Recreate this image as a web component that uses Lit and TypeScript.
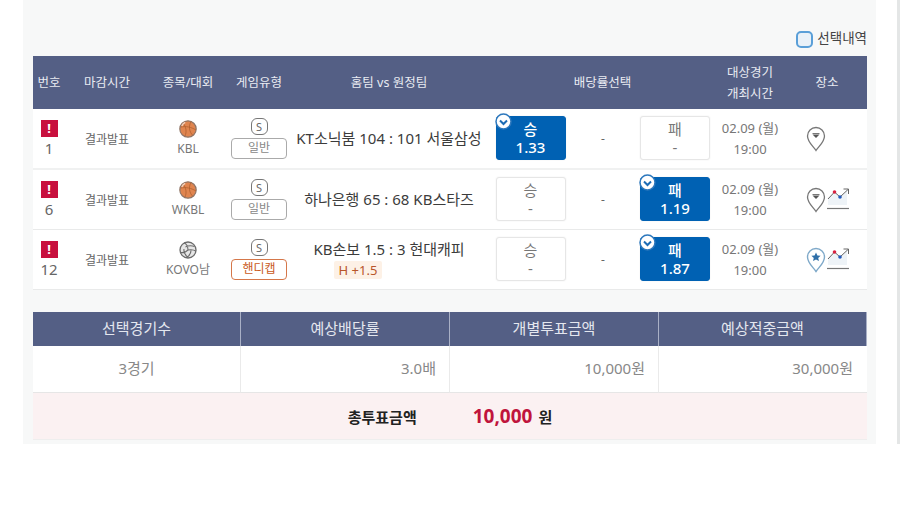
import { LitElement, html, css, svg } from "lit";
import { customElement } from "lit/decorators.js";
import { classMap } from "lit/directives/class-map.js";

const basket = svg`<svg width="18" height="18" viewBox="0 0 18 18"><circle cx="9" cy="9" r="8.200" fill="#e0854f" stroke="#8f7566" stroke-width="1.200"/><path d="M4 3.500C7 6 8 12 6 16M2 7c5-1 10 0 15 3M12 1.500C9.500 6 10 12 14 15.500" fill="none" stroke="#b0602f" stroke-width=".8"/><path d="M2.800 6c.8-1.800 2-3 3.400-3.600" fill="none" stroke="#f5d3bd" stroke-width="1.400"/></svg>`;
const volley = svg`<svg width="18" height="18" viewBox="0 0 18 18"><circle cx="9" cy="9" r="8" fill="#e6e6e6" stroke="#6b6b6b" stroke-width="1.300"/><path d="M9 9C9 6 7.500 3 5 1.800M9 9c3-.5 6-.3 8 1.200M9 9c-2 2-5 3-7.500 2.500M6.500 6c3-1.500 6-1.500 9-.5M5 8c-.5 3 1 6 4 8.500M12 9.500c0 3-1.500 5-3.500 6.500" fill="none" stroke="#6b6b6b" stroke-width="1.100"/></svg>`;
const pinDown = svg`<svg width="20" height="26" viewBox="0 0 20 26"><path d="M10 24.500C7 20 1.500 16 1.500 10a8.500 8.500 0 0 1 17 0C18.500 16 13 20 10 24.500Z" fill="#fff" stroke="#777" stroke-width="1.300"/><path d="M6.500 8.500h7L10 12Z" fill="#555"/><path d="M6.500 7.500h7" stroke="#555" stroke-width=".8"/></svg>`;
const pinStar = svg`<svg width="20" height="26" viewBox="0 0 20 26"><path d="M10 24.500C7 20 1.500 16 1.500 10a8.500 8.500 0 0 1 17 0C18.500 16 13 20 10 24.500Z" fill="#fff" stroke="#7fa9c9" stroke-width="1.400"/><path d="M10 5.500l1.400 3 3.200.3-2.400 2.100.8 3.200L10 12.400l-3 1.700.8-3.200-2.400-2.100 3.200-.3Z" fill="#2f6fa8"/></svg>`;
const chart = svg`<svg width="23" height="24" viewBox="0 0 23 24"><path d="M1 11 7.500 4l5.500 5 7-6v14H1Z" fill="#eef3f7"/><path d="M1 11 7.500 4l5.500 5 8-7.500M16.500 1H21.500V6" fill="none" stroke="#666" stroke-width="1"/><circle cx="7.500" cy="4" r="1.800" fill="#d8213f"/><circle cx="13" cy="9" r="1.800" fill="#2358b8"/><path d="M0 20.500h22" stroke="#777" stroke-width="1.200"/></svg>`;
const check = svg`<svg class="chk" width="17" height="17" viewBox="0 0 17 17"><circle cx="8.500" cy="8.500" r="7.500" fill="#fff" stroke="#2d78bd" stroke-width="1.500"/><path d="M5 7.500 8.500 11 12 7.500" fill="none" stroke="#1d6cb5" stroke-width="2"/></svg>`;

interface Game {
  no: number; sport: string; ball: "b" | "v"; handi: boolean; teams: string; sub?: string;
  side: "win" | "lose"; odd: string; pin: "d" | "s"; trend: boolean;
}
const games: Game[] = [
  { no: 1, sport: "KBL", ball: "b", handi: false, teams: "KT소닉붐 104 : 101 서울삼성", side: "win", odd: "1.33", pin: "d", trend: false },
  { no: 6, sport: "WKBL", ball: "b", handi: false, teams: "하나은행 65 : 68 KB스타즈", side: "lose", odd: "1.19", pin: "d", trend: true },
  { no: 12, sport: "KOVO남", ball: "v", handi: true, teams: "KB손보 1.5 : 3 현대캐피", sub: "H +1.5", side: "lose", odd: "1.87", pin: "s", trend: true },
];

@customElement("app-root")
export class AppRoot extends LitElement {
  static styles = css`
    :host { display: flex; height: 517px; width: 900px; overflow: hidden; background: #fff; font-family: "Noto Sans", "Noto Sans CJK KR", sans-serif; color: #666; }
    .panel { margin-left: 23px; width: 853px; height: 444px; box-sizing: border-box; padding: 0 9px 0 10px; background: #f7f8f8; }
    .strip { margin-left: 21px; width: 3px; height: 444px; background: #e4e6e6; }
    .top { height: 56px; box-sizing: border-box; padding-top: 30px; display: flex; justify-content: flex-end; align-items: flex-start; gap: 4px; font-size: 13.500px; line-height: 17px; color: #444; }
    .cb { width: 13px; height: 13px; border: 2px solid #5a9fd8; border-radius: 5px; background: #e9f1f8; margin-top: 1px; }
    .grid { display: grid; grid-template-columns: 32px 84px 78px 64px 196px 87px 58px 86px 64px 85px; align-items: center; }
    .head { background: #545f85; color: #e9ebf2; height: 53px; font-size: 12.500px; text-align: center; line-height: 21px; }
    .row { background: #fff; border-bottom: 1px solid #e9eaea; height: 60px; text-align: center; font-size: 12px; box-sizing: border-box; }
    .row.first { height: 61px; border-bottom: 2px solid #f0f1f1; }
    .place-h { padding-left: 5px; }
    .no { display: flex; flex-direction: column; align-items: center; font-size: 15px; line-height: 22px; margin-top: 2px; }
    .alert { width: 17px; height: 17px; background: #c8103e; color: #fff; font-size: 13px; font-weight: 700; line-height: 17px; }
    .sport { display: flex; flex-direction: column; align-items: center; font-size: 12px; line-height: 16px; gap: 3px; color: #777; }
    .sport svg { display: block; }
    .type { display: flex; flex-direction: column; align-items: center; gap: 3px; }
    .s { width: 15px; height: 15px; border: 1px solid #777; border-radius: 6px; font-size: 11px; line-height: 15px; color: #666; }
    .tag { width: 54px; height: 19px; border: 1px solid #aaa; border-radius: 4px; font-size: 12px; line-height: 18px; color: #888; }
    .tag.h { border-color: #d5774a; color: #c95a22; }
    .teams { font-size: 15px; color: #3c3c3c; line-height: 20px; display: flex; flex-direction: column; align-items: center; gap: 2px; margin-top: -1px; }
    .sub { background: #fdf1e6; color: #b8552a; font-size: 13px; line-height: 18px; padding: 0 5px; border-radius: 2px; margin-left: -62px; }
    .box { position: relative; justify-self: center; width: 68px; height: 42px; margin-bottom: 1px; border: 1px solid #e6e6e6; border-radius: 3px; box-shadow: 0 0 2px #eee; background: #fff; color: #777; font-size: 15px; display: flex; flex-direction: column; justify-content: center; }
    .box span { line-height: 18px; }
    .box.on { background: #0061b3; border-color: #0061b3; color: #fff; font-weight: 500; }
    .chk { position: absolute; left: -2px; top: -4px; }
    .date { font-size: 13px; line-height: 21px; color: #777; }
    .place { display: flex; align-items: center; padding-left: 24px; }
    .place svg { display: block; flex: none; }
    .place .tr { margin-left: 1px; margin-top: 1px; }
    .sum { margin-top: 22px; }
    .sgrid { display: grid; grid-template-columns: 208px 209px 209px 208px; }
    .sgrid > div { box-sizing: border-box; }
    .sh { background: #545f85; color: #e4e7ef; font-size: 15px; text-align: center; line-height: 33px; height: 34px; border-right: 1px solid #a9b0c6; }
    .sh:last-child, .sv:last-child { border-right: 0; }
    .sv { background: #fff; height: 47px; font-size: 15px; line-height: 44px; color: #888; text-align: right; padding-right: 13px; border-right: 1px solid #eaeaea; border-bottom: 1px solid #e6e6e6; }
    .sv:last-child { padding-right: 14px; }
    .sv.c { text-align: center; padding-right: 0; }
    .total { height: 47px; background: #fbf1f2; border-bottom: 1px solid #eee; box-sizing: border-box; display: flex; justify-content: center; align-items: center; font-size: 15px; font-weight: 700; color: #222; }
    .amt { margin-left: 56px; margin-right: 6px; color: #c0143c; font-size: 19px; }
  `;

  private box(label: string, g: Game, on: boolean) {
    return html`<div class=${classMap({ box: true, on })}>
      ${on ? check : ""}<span>${label}</span><span>${on ? g.odd : "-"}</span>
    </div>`;
  }

  render() {
    return html`
      <div class="panel">
        <div class="top"><div class="cb"></div>선택내역</div>
        <div class="grid head">
          <div>번호</div><div>마감시간</div><div>종목/대회</div><div>게임유형</div><div>홈팀 vs 원정팀</div>
          <div style="grid-column: span 3">배당률선택</div>
          <div>대상경기<br />개최시간</div><div class="place-h">장소</div>
        </div>
        ${games.map((g, i) => html`
          <div class=${classMap({ grid: true, row: true, first: i === 0 })}>
            <div class="no"><div class="alert">!</div>${g.no}</div>
            <div>결과발표</div>
            <div class="sport">${g.ball === "b" ? basket : volley}${g.sport}</div>
            <div class="type"><div class="s">S</div><div class=${classMap({ tag: true, h: g.handi })}>${g.handi ? "핸디캡" : "일반"}</div></div>
            <div class="teams"><div>${g.teams}</div>${g.sub ? html`<div class="sub">${g.sub}</div>` : ""}</div>
            ${this.box("승", g, g.side === "win")}
            <div>-</div>
            ${this.box("패", g, g.side === "lose")}
            <div class="date">02.09 (월)<br />19:00</div>
            <div class="place">${g.pin === "d" ? pinDown : pinStar}${g.trend ? html`<span class="tr">${chart}</span>` : ""}</div>
          </div>`)}
        <div class="sum">
          <div class="sgrid">
            <div class="sh">선택경기수</div><div class="sh">예상배당률</div><div class="sh">개별투표금액</div><div class="sh">예상적중금액</div>
            <div class="sv c">3경기</div><div class="sv">3.0배</div><div class="sv">10,000원</div><div class="sv">30,000원</div>
          </div>
          <div class="total">총투표금액<span class="amt">10,000</span>원</div>
        </div>
      </div>
      <div class="strip"></div>
    `;
  }
}
